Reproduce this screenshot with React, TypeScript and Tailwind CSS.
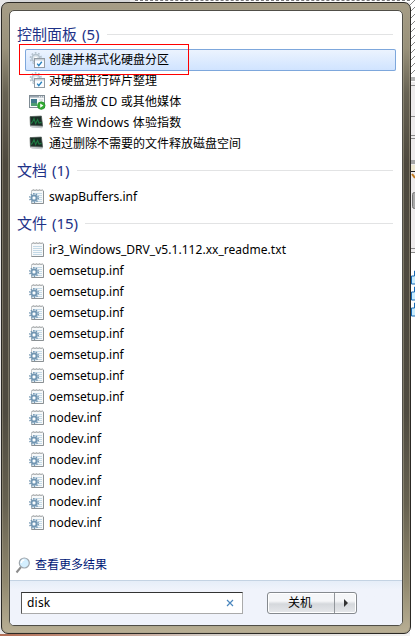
import React from 'react';

type IconKind = 'settings' | 'autoplay' | 'monitor' | 'inf' | 'txt';

const Cog = ({ x, y, r, color, inner }: { x: number; y: number; r: number; color: string; inner: string }) => (
  <g>
    <circle cx={x} cy={y} r={r} fill="none" stroke={color} strokeWidth="1.6" strokeDasharray={`${(r * Math.PI) / 10} ${(r * Math.PI) / 10}`} />
    <circle cx={x} cy={y} r={r - 1.6} fill={inner} stroke={color} strokeWidth="1.6" />
    <circle cx={x} cy={y} r={r * 0.27} fill="#fff" />
  </g>
);

function Icon({ kind }: { kind: IconKind }) {
  return (
    <svg width="17" height="17" viewBox="0 0 17 17" className="block shrink-0">
      {kind === 'settings' && (
        <g>
          <Cog x={6.8} y={6.3} r={5.4} color="#b3c1cc" inner="#dde6ed" />
          <rect x="5.5" y="6.5" width="10" height="9" fill="#fafcff" stroke="#929ba4" />
          <rect x="6" y="7" width="9" height="1.5" fill="#c8d0d7" />
          <path d="M8.2 11.6 9.8 13.6 12.8 9.8" fill="none" stroke="#2b83bf" strokeWidth="1.4" />
        </g>
      )}
      {kind === 'autoplay' && (
        <g>
          <rect x=".5" y="2.5" width="15" height="12" fill="#f8fafb" stroke="#7f8b94" />
          <rect x="1" y="3" width="14" height="1.6" fill="#9aa6b0" />
          <path d="M10 3.8h1M12 3.8h1M14 3.8h1" stroke="#fff" />
          <rect x="2" y="6" width="6" height="7" fill="#3e788c" />
          <rect x="2" y="10" width="6" height="3" fill="#4e9c73" />
          <path d="M10 7h4" stroke="#c3cad0" />
          <circle cx="12.3" cy="12.6" r="3.8" fill="#35ac35" stroke="#1b8a28" strokeWidth=".6" />
          <path d="M11.2 10.5v4.2l3.2-2.1z" fill="#fff" />
        </g>
      )}
      {kind === 'monitor' && (
        <g>
          <path d="M1 2.5 12.5 2l1.5 10.5-1 1.7L3 13.5l-2-1z" fill="#b4babd" />
          <path d="M1 2.6 12.4 2l1.2 10L1.4 11.3z" fill="#1b2f26" stroke="#59635f" strokeWidth=".7" />
          <path d="M2 9.5 3.5 8 5 4.5 6.6 9.5 8.6 5.5 10 9l2.5-.6" fill="none" stroke="#1f7a42" strokeWidth="1.1" />
          <path d="m2 12.6 11 .8" stroke="#d3d6d7" strokeWidth=".8" />
        </g>
      )}
      {(kind === 'inf' || kind === 'txt') && (
        <g>
          <path d="M2.5 2.5h12v13h-12z" fill="#f7f9fa" stroke="#c2c6c8" />
          <path d="M14.5 3v12.5h-12" fill="none" stroke="#8b9194" />
          <path d="M4 5.5h9M4 7.5h9M4 9.5h9M4 11.5h9M4 13.5h9" stroke="#c4d9e6" />
          <path d="m3 3 1.5-2L6 3l1.5-2L9 3l1.5-2L12 3l1.5-2" fill="none" stroke="#aeb0b1" strokeWidth=".9" />
          {kind === 'inf' && <Cog x={5} y={10} r={4.2} color="#7296b2" inner="#d2e2ee" />}
        </g>
      )}
    </svg>
  );
}

function Header({ title, count }: { title: string; count: string }) {
  return (
    <div className="flex h-[26px] items-center pl-[7px] pr-[9px] text-[15px] text-[#1e3287]">
      <span className="shrink-0 whitespace-pre [word-spacing:1px]">{title} {count}</span>
      <span className="ml-[7px] h-px flex-1 bg-[#e2e3e4]" />
    </div>
  );
}

function Row({ icon, label, selected = false, spacing = '' }: { icon: IconKind; label: string; selected?: boolean; spacing?: string }) {
  return (
    <div
      className={`ml-[15px] mr-[6px] flex h-[21px] items-center gap-1 pl-1 ${
        selected ? 'rounded-[2px] bg-linear-to-b from-[#edf4fe] to-[#cfe3ff] ring-1 ring-inset ring-[#7da7dc]' : ''
      }`}
    >
      <Icon kind={icon} />
      <span className={`-ml-px whitespace-pre ${spacing}`}>{label}</span>
    </div>
  );
}

function Backdrop() {
  return (
    <div className="absolute inset-0 overflow-hidden bg-[#e9e8e8]">
      <div className="absolute left-[10px] top-0 h-[2px] w-[120px] bg-[#d5d6d8]" />
      <div className="absolute left-[135px] right-0 top-0 h-[2px] border-t border-dashed border-[#77777a] bg-white" />
      <div className="absolute bottom-0 left-0 h-[2px] w-full bg-linear-to-r from-[#b16c53] via-[#d0cac4] to-[#f4f4f4]" />
      <svg width="5" height="636" className="absolute right-0 top-0">
        <rect width="5" height="636" fill="#fff" />
        {Array.from({ length: 11 }, (_, i) => (
          <path key={i} d={`M0 ${i * 7 + 5}l5-5`} stroke="#888" />
        ))}
        <rect y="77" width="5" height="4" fill="#b5b5b5" />
        <rect y="82" width="5" height="170" fill="#eeeced" />
        <path d="M0 85.5h5M0 116.5h5M0 135.5h5M0 138.5h5M0 248.5h5M0 252.5h5" stroke="#8b8b8b" />
        <rect y="160" width="5" height="4" fill="#a5a5a5" />
        <rect y="165" width="5" height="6" fill="#eee8d2" />
        <path d="M0 171.5h5" stroke="#222" />
        <path d="M2 174l3 4" stroke="#c27b20" strokeWidth="2" />
        <rect x="2.5" y="192.5" width="5" height="16" rx="2" fill="#aaa" stroke="#777" />
        {[275, 291, 307].map((y) => (
          <path key={y} d={`M5.5 ${y - 4}h-1v5h-3v8h4`} fill="#c9edff" stroke="#1769b3" />
        ))}
      </svg>
    </div>
  );
}

export default function App() {
  return (
    <div className="relative h-[636px] w-[415px] overflow-hidden pl-px pt-[2px] font-['Noto_Sans','Noto_Sans_CJK_SC',sans-serif] text-[12px] leading-none text-black">
      <Backdrop />
      <main className="relative h-[632px] w-[410px] rounded-[7px] border border-[#2c2a25] bg-[linear-gradient(180deg,#a69d86_0,#99917a_45px,#686354_90px,#4e493e_160px,#4f4b40_410px,#666150_500px,#91896f_580px,#bbb196_632px)] p-[7px] shadow-[inset_0_0_0_1px_#a59e8a80]">
        <div className="flex h-[616px] w-[394px] flex-col overflow-hidden rounded-[5px] border border-[#504e47] bg-white ring-1 ring-[#aaa58f80]">
          <section className="h-[569px] shrink-0 pt-[10px]">
            <Header title="控制面板" count="(5)" />
            <div className="mt-[2px]">
              <div className="-mb-px [&>div]:h-[22px]">
                <Row icon="settings" label="创建并格式化硬盘分区" selected />
              </div>
              <Row icon="settings" label="对硬盘进行碎片整理" />
              <Row icon="autoplay" label="自动播放 CD 或其他媒体" spacing="tracking-[0.14px]" />
              <Row icon="monitor" label="检查 Windows 体验指数" spacing="tracking-[0.2px]" />
              <Row icon="monitor" label="通过删除不需要的文件释放磁盘空间" />
            </div>
            <div className="mt-[3px]"><Header title="文档" count="(1)" /></div>
            <div className="mt-[3px]"><Row icon="inf" label="swapBuffers.inf" /></div>
            <div className="mt-[3px]"><Header title="文件" count="(15)" /></div>
            <div className="mt-[3px]">
              <Row icon="txt" label="ir3_Windows_DRV_v5.1.112.xx_readme.txt" spacing="tracking-[0.04px]" />
              {Array.from({ length: 7 }, (_, i) => <Row key={i} icon="inf" label="oemsetup.inf" />)}
              {Array.from({ length: 6 }, (_, i) => <Row key={i} icon="inf" label="nodev.inf" />)}
            </div>
            <div className="mt-[22px] flex h-[20px] items-center pl-[5px] text-[#001777]">
              <svg width="16" height="17" viewBox="0 0 16 17" className="mr-1">
                <path d="m6 10-4.5 5.5" stroke="#8c8c8c" strokeWidth="2" />
                <circle cx="9.3" cy="6" r="5" fill="#d4efff" stroke="#9fa7ae" strokeWidth="1.2" />
                <path d="M6.3 6q0-3 3-3" fill="none" stroke="#fff" strokeWidth="1.5" />
              </svg>
              查看更多结果
            </div>
          </section>
          <footer className="flex flex-1 items-start border-t border-[#c4d3e3] bg-linear-to-b from-[#e6eef8] to-[#f0f3fb] to-20% pl-[11px] pt-[11px]">
            <div className="flex h-[22px] w-[222px] items-center justify-between border border-[#aaa] border-l-[#555] border-t-[#333] bg-white pl-[5px] pr-2">
              <span className="tracking-[0.2px]">disk</span>
              <svg width="8" height="8"><path d="m1 1 6 6m0-6-6 6" stroke="#4a86bd" strokeWidth="1.2" /></svg>
            </div>
            <div className="ml-6 flex h-[22px] w-[90px] rounded-[3px] border border-[#85898e] bg-linear-to-b from-[#f5f6f8] from-40% via-[#d5d8dc] via-55% to-[#e6e8eb] shadow-[inset_0_0_0_1px_#fff]">
              <span className="flex w-[67px] items-center justify-center border-r border-[#92969b] pr-[2px]">关机</span>
              <svg width="21" height="20"><path d="M9 6v8l4-4z" fill="#333" /></svg>
            </div>
          </footer>
        </div>
        <div className="absolute left-[17px] top-[41px] h-[31px] w-[170px] border border-[#ff0000]" />
      </main>
    </div>
  );
}
